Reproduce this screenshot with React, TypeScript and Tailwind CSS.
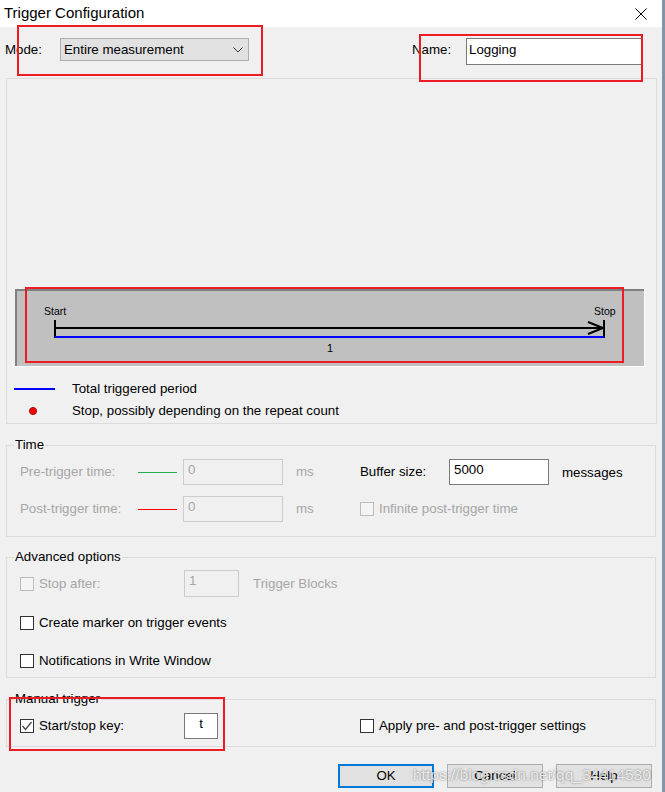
import clsx from 'clsx'

function Checkbox({ checked, disabled }: { checked?: boolean; disabled?: boolean }) {
  return (
    <span
      className={clsx(
        'w-[14px] h-[14px] border shrink-0 flex items-center justify-center',
        disabled ? 'border-[#bcbcbc] bg-[#f4f4f4]' : 'border-[#333333] bg-white'
      )}
    >
      {checked && (
        <svg width="12" height="12" viewBox="0 0 12 12">
          <polyline points="1.5,6 4.5,9.5 10.5,2" fill="none" stroke="#4a4a4a" strokeWidth="1.4" />
        </svg>
      )}
    </span>
  )
}

function Field({
  value,
  disabled,
  className,
}: {
  value: string
  disabled?: boolean
  className?: string
}) {
  return (
    <div
      className={clsx(
        'border pl-[4px] pt-[2px] leading-[16px] shrink-0',
        disabled ? 'border-[#cccccc] bg-[#f0f0f0] text-[#a6a6a6]' : 'border-[#7a7a7a] bg-white text-black',
        className
      )}
    >
      {value}
    </div>
  )
}

// short coloured swatch line next to the pre/post trigger labels
function Swatch({ color }: { color: string }) {
  return (
    <svg width="39" height="3" className="block shrink-0">
      <line x1="0" y1="1.5" x2="39" y2="1.5" stroke={color} strokeWidth="1.2" />
    </svg>
  )
}

function Group({ title, children, className }: { title: string; children: React.ReactNode; className?: string }) {
  return (
    <fieldset className={clsx('mx-[6px] w-[650px] border border-[#dcdcdc]', className)}>
      <legend className="ml-[7px] px-[1px] leading-[16px] text-black">{title}</legend>
      {children}
    </fieldset>
  )
}

function Timeline() {
  return (
    <svg width="630" height="78" className="block">
      <rect x="0" y="0" width="630" height="78" fill="#c0c0c0" />
      <line x1="0" y1="1" x2="630" y2="1" stroke="#808080" strokeWidth="2" />
      <line x1="1" y1="0" x2="1" y2="78" stroke="#808080" strokeWidth="2" />
      <line x1="0" y1="77.5" x2="630" y2="77.5" stroke="#ffffff" strokeWidth="1" />
      <line x1="629.5" y1="0" x2="629.5" y2="78" stroke="#ffffff" strokeWidth="1" />
      <text x="29" y="26" fontSize="10.5" fontFamily="Liberation Sans, Arial, sans-serif" fill="#000">
        Start
      </text>
      <text x="579" y="26" fontSize="10.5" fontFamily="Liberation Sans, Arial, sans-serif" fill="#000">
        Stop
      </text>
      <line x1="40" y1="31" x2="40" y2="49" stroke="#000" strokeWidth="2" />
      <line x1="589" y1="31" x2="589" y2="49" stroke="#000" strokeWidth="2" />
      <line x1="40" y1="39" x2="589" y2="39" stroke="#000" strokeWidth="2" />
      <polyline points="573,33 588,39 573,45" fill="none" stroke="#000" strokeWidth="2" />
      <line x1="40" y1="48" x2="589" y2="48" stroke="#0000ff" strokeWidth="2" />
      <text x="312" y="63" fontSize="11" fontFamily="Liberation Sans, Arial, sans-serif" fill="#000">
        1
      </text>
    </svg>
  )
}

const redBox = 'absolute border-2 border-[#ed1c24] pointer-events-none'

export default function App() {
  return (
    <div className="relative w-[665px] h-[792px] overflow-hidden flex font-['Liberation_Sans',Arial,sans-serif] text-[13.3px] text-black">
      <div className="w-[662px] h-full flex flex-col bg-[#f0f0f0]">
        {/* Title bar */}
        <div className="h-[27px] bg-white flex items-center justify-between pl-[4px] pr-[15px]">
          <span className="text-[15px]">Trigger Configuration</span>
          <svg width="12" height="12" viewBox="0 0 12 12">
            <line x1="0.5" y1="0.5" x2="11.5" y2="11.5" stroke="#000" strokeWidth="1" />
            <line x1="11.5" y1="0.5" x2="0.5" y2="11.5" stroke="#000" strokeWidth="1" />
          </svg>
        </div>

        {/* Mode / Name */}
        <div className="h-[51px] pt-[11px] flex items-start">
          <div className="ml-[5px] w-[55px] h-[23px] flex items-center">Mode:</div>
          <div className="w-[189px] h-[23px] border border-[#adadad] bg-[#e1e1e1] flex items-center justify-between pl-[3px] pr-[5px]">
            <span>Entire measurement</span>
            <svg width="10" height="6" viewBox="0 0 10 6">
              <polyline points="0.5,0.5 5,5 9.5,0.5" fill="none" stroke="#333" strokeWidth="1" />
            </svg>
          </div>
          <div className="ml-[163px] w-[54px] h-[23px] flex items-center">Name:</div>
          <div className="w-[176px] h-[27px] border border-[#7a7a7a] bg-white pl-[2px] pt-[3px] leading-[16px]">
            Logging
          </div>
        </div>

        {/* Preview */}
        <div className="mx-[6px] w-[651px] h-[346px] border border-[#dcdcdc] pt-[210px] pl-[8px] shrink-0">
          <Timeline />
          <div className="mt-[11px] h-[22px] flex items-center">
            <span className="ml-[-1px] w-[41px] h-[2px] bg-[#0000ff]" />
            <span className="ml-[17px]">Total triggered period</span>
          </div>
          <div className="h-[22px] flex items-center">
            <span className="ml-[14px] w-[8px] h-[8px] rounded-full bg-[#ff0000] border border-[#a00000]" />
            <span className="ml-[35px]">Stop, possibly depending on the repeat count</span>
          </div>
        </div>

        {/* Time */}
        <Group title="Time" className="mt-[13px]">
          <div className="mt-[6px] h-[26px] flex items-center pl-[13px]">
            <span className="w-[118px] text-[#a6a6a6]">Pre-trigger time:</span>
            <Swatch color="#22b14c" />
            <Field value="0" disabled className="ml-[6px] w-[100px] h-[26px]" />
            <span className="ml-[13px] w-[64px] text-[#a6a6a6]">ms</span>
            <span className="w-[89px]">Buffer size:</span>
            <Field value="5000" className="w-[100px] h-[26px]" />
            <span className="ml-[13px] mt-[2px]">messages</span>
          </div>
          <div className="mt-[11px] mb-[14px] h-[26px] flex items-center pl-[13px]">
            <span className="w-[118px] text-[#a6a6a6]">Post-trigger time:</span>
            <Swatch color="#ff0000" />
            <Field value="0" disabled className="ml-[6px] w-[100px] h-[26px]" />
            <span className="ml-[13px] w-[64px] text-[#a6a6a6]">ms</span>
            <Checkbox disabled />
            <span className="ml-[5px] text-[#a6a6a6]">Infinite post-trigger time</span>
          </div>
        </Group>

        {/* Advanced options */}
        <Group title="Advanced options" className="mt-[12px]">
          <div className="mt-[5px] h-[27px] flex items-center pl-[13px]">
            <Checkbox disabled />
            <span className="ml-[5px] w-[145px] text-[#a6a6a6]">Stop after:</span>
            <Field value="1" disabled className="w-[55px] h-[27px]" />
            <span className="ml-[14px] text-[#a6a6a6]">Trigger Blocks</span>
          </div>
          <div className="mt-[12px] h-[27px] flex items-center pl-[13px]">
            <Checkbox />
            <span className="ml-[5px]">Create marker on trigger events</span>
          </div>
          <div className="mt-[11px] mb-[3px] h-[27px] flex items-center pl-[13px]">
            <Checkbox />
            <span className="ml-[5px]">Notifications in Write Window</span>
          </div>
        </Group>

        {/* Manual trigger */}
        <Group title="Manual trigger" className="mt-[13px]">
          <div className="mt-[6px] mb-[7px] h-[26px] flex items-center pl-[13px]">
            <Checkbox checked />
            <span className="ml-[5px] w-[145px]">Start/stop key:</span>
            <div className="w-[34px] h-[26px] border border-[#7a7a7a] bg-white text-center pt-[2px] leading-[16px]">t</div>
            <span className="ml-[142px]" />
            <Checkbox />
            <span className="ml-[5px]">Apply pre- and post-trigger settings</span>
          </div>
        </Group>

        {/* Buttons */}
        <div className="mt-[17px] flex justify-end gap-[13px] pr-[10px]">
          <button className="w-[96px] h-[24px] border-2 border-[#0078d7] bg-[#e1e1e1]">OK</button>
          <button className="w-[96px] h-[24px] border border-[#adadad] bg-[#e1e1e1]">Cancel</button>
          <button className="w-[96px] h-[24px] border border-[#adadad] bg-[#e1e1e1]">Help</button>
        </div>
      </div>
      <div className="w-[3px] h-full bg-[#8395a8]" />

      {/* Annotation boxes */}
      <div className={clsx(redBox, 'left-[17px] top-[25px] w-[246px] h-[51px]')} />
      <div className={clsx(redBox, 'left-[419px] top-[34px] w-[224px] h-[48px]')} />
      <div className={clsx(redBox, 'left-[25px] top-[287px] w-[599px] h-[76px]')} />
      <div className={clsx(redBox, 'left-[9px] top-[697px] w-[216px] h-[54px]')} />

      {/* Watermark */}
      <div className="absolute left-[413px] top-[765px] text-[15.5px] leading-[20px] text-white/80 [text-shadow:0_0_2px_rgba(0,0,0,0.55)] pointer-events-none">
        https://blog.csdn.net/qq_34414530
      </div>
    </div>
  )
}
